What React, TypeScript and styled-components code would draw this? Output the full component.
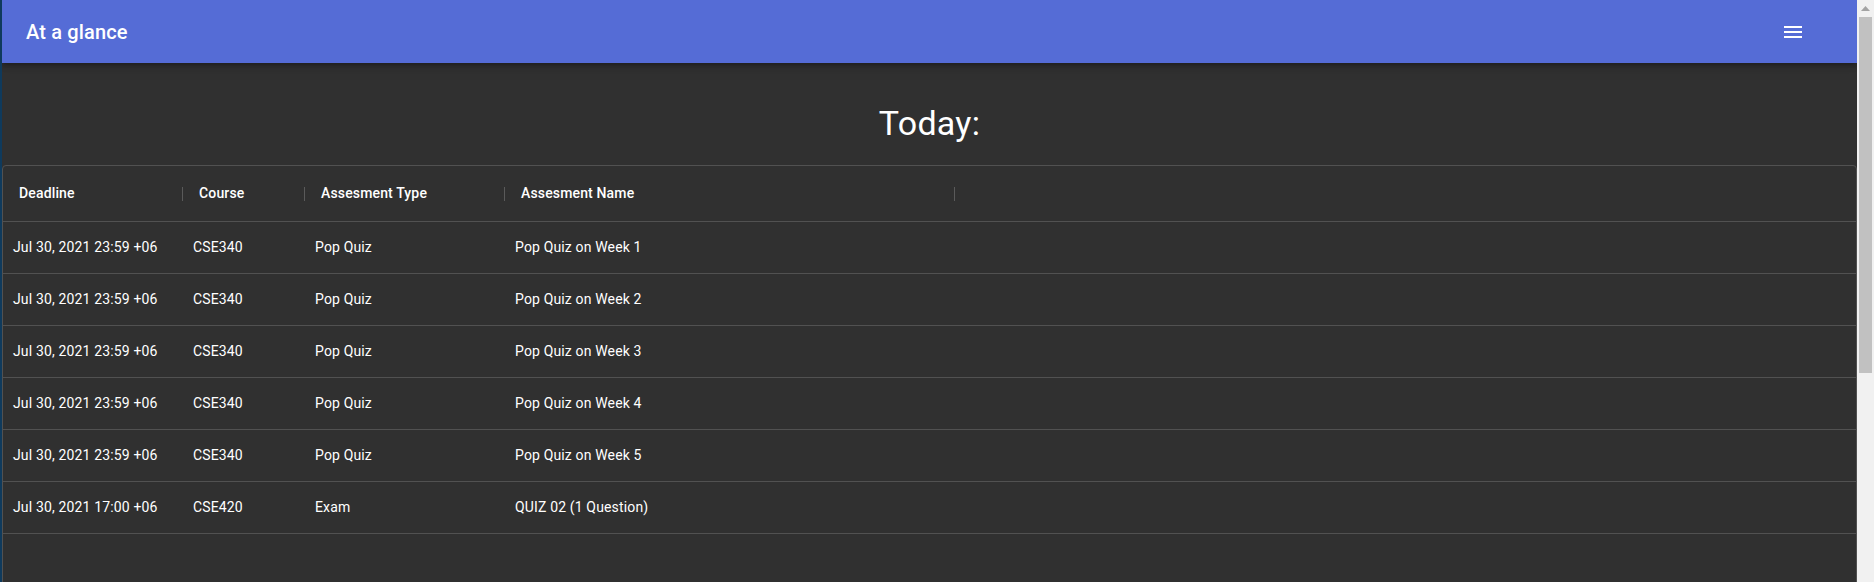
import React from "react";
import styled, { createGlobalStyle } from "styled-components";

const GlobalStyle = createGlobalStyle`
  html, body {
    margin: 0;
    padding: 0;
    overflow: hidden;
    background: #303030;
    font-family: Roboto, "Noto Sans", "Liberation Sans", sans-serif;
  }
  * { box-sizing: border-box; }
`;

const Frame = styled.div`
  display: flex;
  height: 582px;
  width: 1874px;
  overflow: hidden;
`;

const EdgeStrip = styled.div`
  width: 2px;
  flex-shrink: 0;
  background: #0f3a5c;
`;

const Main = styled.div`
  flex: 1;
  min-width: 0;
  display: flex;
  flex-direction: column;
  overflow: hidden;
  background: #303030;
`;

const AppBar = styled.header`
  height: 63px;
  flex-shrink: 0;
  display: flex;
  align-items: center;
  justify-content: space-between;
  padding: 0 40px 0 24px;
  background: #556cd6;
  color: #fff;
  box-shadow: 0px 2px 4px -1px rgba(0, 0, 0, 0.2),
    0px 4px 5px 0px rgba(0, 0, 0, 0.14), 0px 1px 10px 0px rgba(0, 0, 0, 0.12);
  position: relative;
  z-index: 1;
`;

const BrandTitle = styled.h6`
  margin: 0;
  font-size: 20px;
  font-weight: 500;
  letter-spacing: 0.15px;
  line-height: 1.6;
`;

const MenuButton = styled.button`
  display: flex;
  align-items: center;
  justify-content: center;
  padding: 12px;
  margin-top: 1px;
  border: none;
  background: transparent;
  color: #fff;
  cursor: pointer;
`;

const Content = styled.main`
  flex: 1;
  display: flex;
  flex-direction: column;
  padding-top: 40px;
  min-height: 0;
`;

const Heading = styled.h4`
  margin: 0 0 20px;
  text-align: center;
  color: #fff;
  font-size: 34px;
  font-weight: 400;
  line-height: 1.235;
  letter-spacing: 0.25px;
`;

const Grid = styled.div`
  flex-shrink: 0;
  height: 600px;
  border: 1px solid rgb(81, 81, 81);
  border-radius: 4px;
  color: #fff;
  font-size: 14px;
  letter-spacing: 0.15px;
`;

const columns = "180px 122px 200px 450px 1fr";

const HeaderRow = styled.div`
  display: grid;
  grid-template-columns: ${columns};
  height: 56px;
  border-bottom: 1px solid rgb(81, 81, 81);
`;

const HeaderCell = styled.div`
  display: flex;
  align-items: center;
  justify-content: space-between;
  padding-left: 16px;
  font-weight: 500;
`;

const Separator = styled.span`
  width: 1px;
  height: 14px;
  margin-top: 1px;
  background: rgb(90, 90, 90);
`;

const Row = styled.div`
  display: grid;
  grid-template-columns: ${columns};
  height: 52px;
  border-bottom: 1px solid rgb(81, 81, 81);
`;

const Cell = styled.div`
  display: flex;
  align-items: center;
  padding-left: 10px;
  white-space: nowrap;
  overflow: hidden;
`;

const ScrollTrack = styled.div`
  width: 17px;
  flex-shrink: 0;
  background: #f1f1f1;
  display: flex;
  flex-direction: column;
  align-items: center;
`;

const ScrollArrow = styled.div`
  height: 17px;
  width: 17px;
  display: flex;
  align-items: center;
  justify-content: center;
`;

const ScrollThumb = styled.div`
  width: 13px;
  height: 356px;
  background: #c1c1c1;
`;

const rows = [
  ["Jul 30, 2021 23:59 +06", "CSE340", "Pop Quiz", "Pop Quiz on Week 1"],
  ["Jul 30, 2021 23:59 +06", "CSE340", "Pop Quiz", "Pop Quiz on Week 2"],
  ["Jul 30, 2021 23:59 +06", "CSE340", "Pop Quiz", "Pop Quiz on Week 3"],
  ["Jul 30, 2021 23:59 +06", "CSE340", "Pop Quiz", "Pop Quiz on Week 4"],
  ["Jul 30, 2021 23:59 +06", "CSE340", "Pop Quiz", "Pop Quiz on Week 5"],
  ["Jul 30, 2021 17:00 +06", "CSE420", "Exam", "QUIZ 02 (1 Question)"],
];

const headers = ["Deadline", "Course", "Assesment Type", "Assesment Name"];

export default function App() {
  return (
    <>
      <GlobalStyle />
      <Frame>
        <EdgeStrip />
        <Main>
          <AppBar>
            <BrandTitle>At a glance</BrandTitle>
            <MenuButton aria-label="menu">
              <svg width="24" height="24" viewBox="0 0 24 24" fill="currentColor">
                <path d="M3 18h18v-2H3v2zm0-5h18v-2H3v2zm0-7v2h18V6H3z" />
              </svg>
            </MenuButton>
          </AppBar>
          <Content>
            <Heading>Today:</Heading>
            <Grid>
              <HeaderRow>
                {headers.map((h) => (
                  <HeaderCell key={h}>
                    <span>{h}</span>
                    <Separator />
                  </HeaderCell>
                ))}
                <HeaderCell />
              </HeaderRow>
              {rows.map((r, i) => (
                <Row key={i}>
                  {r.map((c, j) => (
                    <Cell key={j}>{c}</Cell>
                  ))}
                  <Cell />
                </Row>
              ))}
            </Grid>
          </Content>
        </Main>
        <ScrollTrack>
          <ScrollArrow>
            <svg width="9" height="5" viewBox="0 0 9 5">
              <polygon points="0,5 4.5,0 9,5" fill="#a3a3a3" />
            </svg>
          </ScrollArrow>
          <ScrollThumb />
        </ScrollTrack>
      </Frame>
    </>
  );
}
